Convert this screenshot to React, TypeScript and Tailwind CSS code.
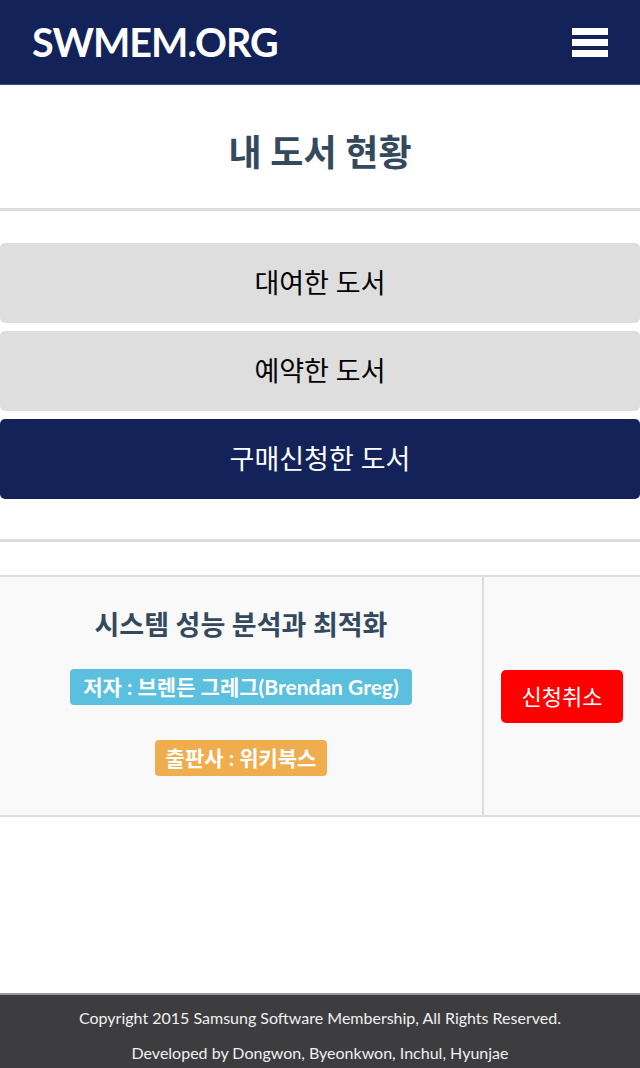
export default function App() {
  const tabs = [
    { label: '대여한 도서', active: false },
    { label: '예약한 도서', active: false },
    { label: '구매신청한 도서', active: true },
  ]

  return (
    <div
      className="min-h-screen flex flex-col bg-white"
      style={{ fontFamily: 'Lato, "Noto Sans CJK KR", sans-serif' }}
    >
      {/* Header */}
      <header className="h-[85px] bg-[#13235a] border-b border-[#3a4a7a] flex items-center justify-between pl-8 pr-8">
        <span className="text-white font-bold text-[39.5px] leading-none tracking-tight">SWMEM.ORG</span>
        <button className="flex flex-col gap-[4px]">
          <span className="block w-[36px] h-[7px] bg-white" />
          <span className="block w-[36px] h-[7px] bg-white" />
          <span className="block w-[36px] h-[7px] bg-white" />
        </button>
      </header>

      <main className="flex-1">
        {/* Page title */}
        <div className="h-[126px] flex items-center justify-center pt-[10px] border-b-[3px] border-[#dddddd]">
          <h1 className="text-[36px] font-bold text-[#34495e]">내 도서 현황</h1>
        </div>

        {/* Tabs */}
        <div className="pt-[32px] pb-[40px] flex flex-col gap-[8px] border-b-[3px] border-[#dddddd]">
          {tabs.map((tab) => (
            <button
              key={tab.label}
              className={`h-[80px] w-full rounded-[5px] text-[27px] flex items-center justify-center ${
                tab.active ? 'bg-[#13235a] text-white' : 'bg-[#dedede] text-black'
              }`}
            >
              {tab.label}
            </button>
          ))}
        </div>

        {/* Book table */}
        <div className="mt-[33px] border-y-2 border-[#dddddd] bg-[#f9f9f9] flex h-[242px]">
          <div className="w-[484px] border-r-2 border-[#dddddd] flex flex-col items-center pt-[30px]">
            <h2 className="text-[27px] font-bold text-[#34495e] leading-[36px]">시스템 성능 분석과 최적화</h2>
            <span className="mt-[26px] h-[36px] px-[13px] rounded-[4px] bg-[#5bc0de] text-white font-bold text-[21px] flex items-center">
              저자 : 브렌든 그레그(Brendan Greg)
            </span>
            <span className="mt-[35px] h-[36px] px-[11px] rounded-[4px] bg-[#f0ad4e] text-white font-bold text-[21px] flex items-center">
              출판사 : 위키북스
            </span>
          </div>
          <div className="flex-1 flex items-center justify-center">
            <button className="w-[122px] h-[53px] rounded-[5px] bg-[#ff0000] text-white text-[22px]">신청취소</button>
          </div>
        </div>
      </main>

      {/* Footer */}
      <footer className="h-[75px] bg-[#3d3d3f] border-t-2 border-[#9a9a9a] flex flex-col items-center justify-center gap-[13px] pt-[7px] text-[#f0f0f0] text-[16px] leading-[22px]">
        <p>Copyright 2015 Samsung Software Membership, All Rights Reserved.</p>
        <p>Developed by Dongwon, Byeonkwon, Inchul, Hyunjae</p>
      </footer>
    </div>
  )
}
